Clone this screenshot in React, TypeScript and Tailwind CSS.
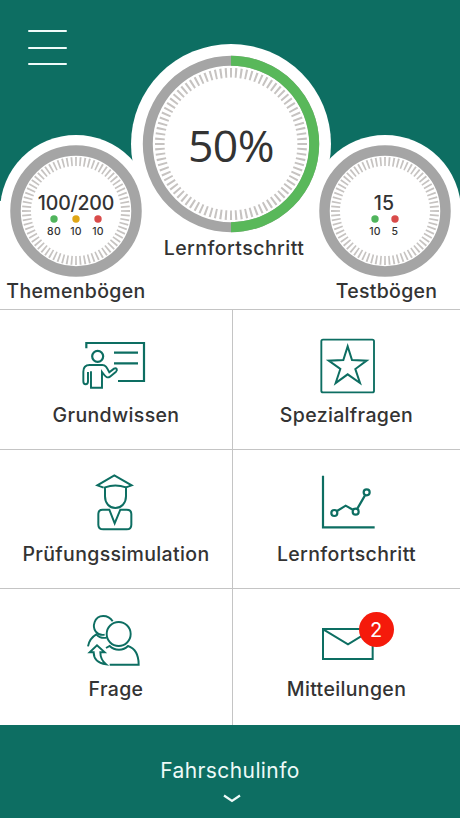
import type { ReactNode } from "react";

const GREEN = "#0d6e62";

type GaugeProps = { size: number; ring: number; width: number; tick: number; tickLength: number; ticks: number; progress?: number };

function Gauge({ size, ring, width, tick, tickLength, ticks, progress = 0 }: GaugeProps) {
  const c = size / 2;
  return (
    <svg className="block" width={size} height={size} viewBox={`0 0 ${size} ${size}`} fill="none">
      <circle cx={c} cy={c} r={ring} stroke="#a5a5a5" strokeWidth={width} />
      {progress > 0 && (
        <circle
          cx={c}
          cy={c}
          r={ring}
          stroke="#59b85a"
          strokeWidth={width}
          pathLength={100}
          strokeDasharray={`${progress} 100`}
          transform={`rotate(-90 ${c} ${c})`}
        />
      )}
      <circle
        cx={c}
        cy={c}
        r={tick}
        stroke="#c6c3c1"
        strokeWidth={tickLength}
        pathLength={ticks * 10}
        strokeDasharray="4 6"
        strokeDashoffset={2}
      />
    </svg>
  );
}

function Count({ color, value }: { color: string; value: number }) {
  return (
    <div className="flex w-[14px] flex-col items-center">
      <svg className={color} width="8" height="8" viewBox="0 0 8 8" fill="currentColor">
        <circle cx="4" cy="4" r="3.7" />
      </svg>
      <span className="mt-[2px] text-[10.5px] font-medium leading-[14px] tracking-[0.3px]">{value}</span>
    </div>
  );
}

function Icon({ box, children }: { box: string; children: ReactNode }) {
  return (
    <svg className="block" width={80} height={64} viewBox={box} fill="none" stroke={GREEN} strokeWidth={6.6}>
      {children}
    </svg>
  );
}

const teacher = (
  <Icon box="108 27 240 192">
    <path d="M139 70V54H312V168H234M222 83H294M222 115H294" />
    <circle cx="173" cy="94" r="16.5" />
    <path d="M144 141V169C144 181 130 181 130 169V140C130 126 137 120 149 120H187C196 120 200 126 208 142L222 131C229 127 234 134 228 140L210 155C202 160 198 157 186 141V188H153V139" strokeWidth="5.8" />
  </Icon>
);

const star = (
  <Icon box="111 27 240 192">
    <rect x="154" y="44" width="158" height="158" rx="5" strokeWidth="5.6" />
    <path d="M233 64L246 105L290 107L256 132L270 174L233 148L197 174L211 132L176 107L220 105Z" strokeWidth="6" />
  </Icon>
);

const graduate = (
  <Icon box="198 15 240 192">
    <path d="M281 68L262 61L313 31L365 61L346 68" strokeWidth="6" />
    <path d="M285 67C304 60 328 60 348 67V94C348 115 334 129 316 129C298 129 285 115 285 94Z" strokeWidth="6" />
    <path d="M298 134H278C269 134 265 139 265 147V179C265 189 271 193 280 193H350C359 193 364 188 364 179V147C364 138 359 134 350 134H331L314 175Z" strokeWidth="6" />
  </Icon>
);

const chart = (
  <Icon box="141 15 240 192">
    <path d="M189 32V187H344M231 138L257 122L280 135M292 131L315 91" />
    <circle cx="223" cy="144" r="9" />
    <circle cx="287" cy="140" r="9" />
    <circle cx="320" cy="82" r="9" />
  </Icon>
);

const people = (
  <Icon box="48 24 240 192">
    <g strokeWidth="5.8">
      <path d="M158 64C145 43 113 41 104 66C96 88 111 108 134 104" />
      <circle cx="176" cy="102" r="36" />
      <path d="M84 139C87 122 97 110 109 103C117 112 128 115 140 113" />
      <path d="M138 144L149 138C164 153 190 153 204 138C225 145 236 163 236 194H149" />
      <path d="M138 193C115 190 101 177 101 157H89L111 136L134 157H121C121 173 127 184 138 193Z" />
    </g>
  </Icon>
);

const mail = (
  <Icon box="111 24 240 192">
    <path d="M159 87H308V177H159ZM161 89L234 133L306 89" strokeWidth="6" />
  </Icon>
);

function Tile({ icon, label, className, badge }: { icon: ReactNode; label: string; className: string; badge?: number }) {
  return (
    <button className={`flex flex-col items-center border-[#c4c4c4] ${className}`}>
      <span className="relative">
        {icon}
        {badge && (
          <span className="absolute left-[52px] top-[4px] flex size-[35px] items-center justify-center rounded-full bg-[#f51a0b] text-[20px] leading-none text-white">
            {badge}
          </span>
        )}
      </span>
      <span className="text-[19.5px] font-medium leading-[28px] tracking-[0.35px]">{label}</span>
    </button>
  );
}

export default function App() {
  return (
    <main className="flex h-[818px] w-[460px] flex-col overflow-hidden bg-white font-['Inter','Liberation_Sans',sans-serif] text-[#333333]">
      <header className="h-[309px] bg-[linear-gradient(#0d6e62_201px,#ffffff_201px)]">
        <div className="flex h-[44px] pl-[28px] pt-[30px]">
          <button className="flex h-[35px] w-[39px] shrink-0 flex-col justify-between" aria-label="Menu">
            <span className="h-[2px] w-full rounded-full bg-[#f0fbfa]" />
            <span className="h-[2px] w-full rounded-full bg-[#f0fbfa]" />
            <span className="h-[2px] w-full rounded-full bg-[#f0fbfa]" />
          </button>
        </div>
        <div className="flex w-[461px] items-start">
          <section className="mt-[91px] flex w-[152px] shrink-0 flex-col items-center">
            <div className="grid size-[152px] place-items-center rounded-full bg-white">
              <div className="col-start-1 row-start-1">
                <Gauge size={152} ring={60.5} width={10.5} tick={49.5} tickLength={9} ticks={72} />
              </div>
              <div className="z-10 col-start-1 row-start-1 mt-[8px] flex flex-col items-center">
                <p className="text-[19.5px] font-medium leading-[22px] tracking-[-0.2px]">100/200</p>
                <div className="mt-[1px] flex gap-[8px]">
                  <Count color="text-[#50b45c]" value={80} />
                  <Count color="text-[#e0a616]" value={10} />
                  <Count color="text-[#d94b4a]" value={10} />
                </div>
              </div>
            </div>
            <h2 className="mt-[-10px] text-[19.5px] font-medium leading-[28px] tracking-[0.35px]">Themenbögen</h2>
          </section>
          <section className="z-10 ml-[-21px] mr-[-22px] flex w-[200px] shrink-0 flex-col items-center">
            <div className="grid size-[200px] place-items-center rounded-full bg-white">
              <div className="col-start-1 row-start-1">
                <Gauge size={200} ring={83.2} width={10} tick={71.2} tickLength={9.6} ticks={88} progress={50} />
              </div>
              <p className="z-10 col-start-1 row-start-1 mt-[2px] font-['Open_Sans','Noto_Sans',sans-serif] text-[44.5px] leading-[50px] tracking-[-0.5px]">
                50%
              </p>
            </div>
            <h2 className="mt-[-10px] pl-[6px] text-[19.5px] font-medium leading-[28px] tracking-[0.45px]">Lernfortschritt</h2>
          </section>
          <section className="mt-[91px] flex w-[152px] shrink-0 flex-col items-center">
            <div className="grid size-[152px] place-items-center rounded-full bg-white">
              <div className="col-start-1 row-start-1">
                <Gauge size={152} ring={60.5} width={10.5} tick={49.5} tickLength={9} ticks={72} />
              </div>
              <div className="z-10 col-start-1 row-start-1 mt-[8px] flex flex-col items-center">
                <p className="pr-[2px] text-[19.5px] font-medium leading-[22px] tracking-[0.2px]">15</p>
                <div className="mt-[1px] flex gap-[6px]">
                  <Count color="text-[#50b45c]" value={10} />
                  <Count color="text-[#d94b4a]" value={5} />
                </div>
              </div>
            </div>
            <h2 className="mt-[-10px] pl-[3px] text-[19.5px] font-medium leading-[28px] tracking-[0.3px]">Testbögen</h2>
          </section>
        </div>
      </header>
      <nav className="grid grid-cols-[233px_227px] grid-rows-[140px_139px_137px]">
        <Tile icon={teacher} label="Grundwissen" className="gap-[3px] border-r border-t pt-[24px]" />
        <Tile icon={star} label="Spezialfragen" className="gap-[3px] border-t pt-[24px]" />
        <Tile icon={graduate} label="Prüfungssimulation" className="gap-[6px] border-r border-t pt-[20px]" />
        <Tile icon={chart} label="Lernfortschritt" className="gap-[6px] border-t pt-[20px]" />
        <Tile icon={people} label="Frage" className="gap-[3px] border-r border-t pt-[19px]" />
        <Tile icon={mail} label="Mitteilungen" className="gap-[3px] border-t pt-[19px]" badge={2} />
      </nav>
      <footer className="flex flex-1 flex-col items-center bg-[#0d6e62] pt-[32px] text-[#eefaf8]">
        <span className="text-[21px] leading-[28px] tracking-[0.4px]">Fahrschulinfo</span>
        <svg className="ml-[3px] mt-[9px] block" width="18" height="9" viewBox="0 0 18 9" fill="none" stroke="currentColor" strokeWidth="2.2">
          <path d="M1 1.5L9 7L17 1.5" />
        </svg>
      </footer>
    </main>
  );
}
